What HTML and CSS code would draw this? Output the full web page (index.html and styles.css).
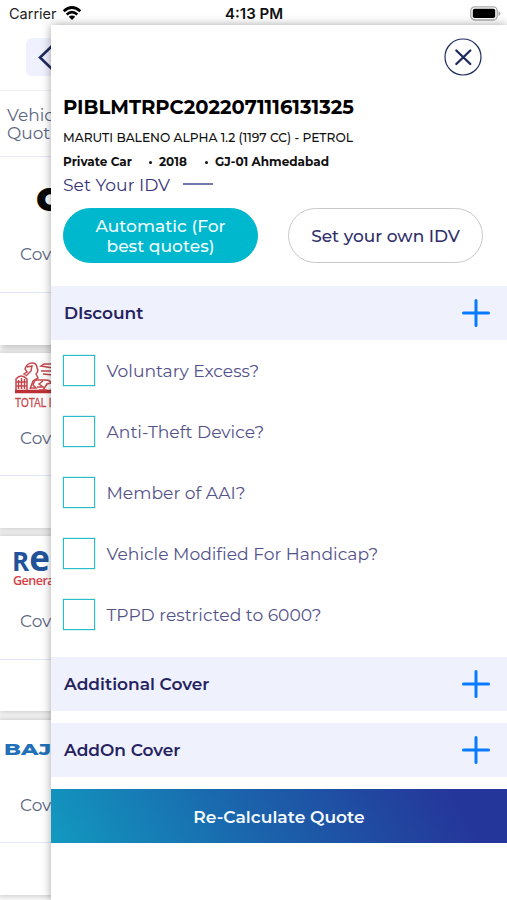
FILE: index.html
```html
<!DOCTYPE html>
<html lang="en">

<head>
    <meta charset="UTF-8" />
    <meta name="viewport" content="width=device-width, initial-scale=1.0" />
    <title>Vehicle Quotes</title>

    <link rel="stylesheet" href="styles.css">
</head>

<body>
    <!-- STATUS BAR -->
    <div class="status">
        <div class="carrier">
            <span>Carrier</span>
            <svg width="20" height="15" viewBox="0 0 20 15" fill="none" stroke="#000" stroke-width="2.7">
                <path d="M1.7 5.2 Q10 -2.2 18.3 5.2" />
                <path d="M4.7 8.5 Q10 3.7 15.3 8.5" />
                <path d="M10 14 L6.8 10.8 Q10 8 13.2 10.8 Z" fill="#000" stroke="none" />
            </svg>
        </div>
        <span class="time">4:13 PM</span>
        <svg class="battery" width="31" height="15" viewBox="0 0 31 15">
            <rect x="0.8" y="0.8" width="26.4" height="13.2" rx="4" fill="#fff" stroke="#aaa" stroke-width="1.3" />
            <rect x="2.8" y="2.8" width="22.4" height="9.2" rx="1.8" fill="#000" />
            <path d="M28.5 5 Q30.5 6 30.5 7.5 Q30.5 9 28.5 10 Z" fill="#aaa" />
        </svg>
    </div>

    <!-- QUOTES LIST -->
    <main class="quotes">
        <div class="topbar">
            <div class="back">
                <svg width="18" height="26" viewBox="0 0 18 26" fill="none" stroke="#202c60" stroke-width="2.6">
                    <path d="M15 2 L3 13.5 L15 25" />
                </svg>
            </div>
        </div>
        <div class="heading">Vehic<br>Quot</div>

        <div class="card first">
            <div class="logo digit">o</div>
            <div class="cover">Cov</div>
            <div class="foot"></div>
        </div>

        <div class="card">
            <div class="logo total">
                <svg width="48" height="33" viewBox="0 0 48 33" fill="none" stroke="#c5474b" stroke-width="1.5">
                    <path d="M0 29.5 H48" stroke="#bd3035" stroke-width="3.5" />
                    <path d="M1 28 V17 Q6 11 12 17 V28 M3.5 18 V27 M6.5 16 V27 M9.5 17 V27 M1 20 H12 M1 24 H12" />
                    <path d="M12 14 L9 12 L12 10 L10 7 Q12 1 17 1 Q22 1 22 6 Q24 9 21 12 L23 16 L18 19 L15 27 M12 5 L17 4 L16 9 L12 13" />
                    <path d="M15 26 H21 L18 23 L20 18 H30 Q36 18 38 23 L36 28 M22 25 H28 L24 22 L28 19 M28 28 L32 22 L36 21 M24 28 H32" />
                    <path d="M38 2 H29 L26 4 L38 6 M26 9 H38 M28 12 L38 13" />
                </svg>
                <span>TOTAL I</span>
            </div>
            <div class="cover">Cov</div>
            <div class="foot"></div>
        </div>

        <div class="card">
            <div class="logo reliance">
                <b><span class="cap">R</span>e</b>
                <span>Genera</span>
            </div>
            <div class="cover">Cov</div>
            <div class="foot"></div>
        </div>

        <div class="card">
            <div class="logo bajaj"><span>BAJ</span></div>
            <div class="cover">Cov</div>
            <div class="foot"></div>
        </div>
    </main>

    <!-- DRAWER -->
    <form class="drawer" action="">
        <button type="button" class="close">
            <svg width="38" height="38" viewBox="0 0 38 38" fill="none" stroke="#1d2b5e">
                <circle cx="19" cy="19" r="18" stroke-width="1.2" />
                <path d="M12.3 12.5 L26.3 26 M26.3 12.5 L12.3 26" stroke-width="2.3" stroke-linecap="round" />
            </svg>
        </button>

        <div class="info">
            <h1>PIBLMTRPC2022071116131325</h1>
            <p class="vehicle">MARUTI BALENO ALPHA 1.2 (1197 CC) - PETROL</p>
            <p class="meta"><span class="type">Private Car</span><span class="year">2018</span><span class="rto">GJ-01 Ahmedabad</span></p>
            <div class="idv"><span>Set Your IDV</span><i></i></div>
            <div class="choice">
                <button type="button" class="pill active">Automatic (For<br>best quotes)</button>
                <button type="button" class="pill">Set your own IDV</button>
            </div>
        </div>

        <div class="section">
            <span>DIscount</span>
            <svg width="28" height="28" viewBox="0 0 28 28" stroke="#087aff" stroke-width="3" stroke-linecap="round">
                <path d="M14 1.5 V26.5 M1.5 14 H26.5" />
            </svg>
        </div>

        <div class="options">
            <label><input type="checkbox"><span>Voluntary Excess?</span></label>
            <label><input type="checkbox"><span>Anti-Theft Device?</span></label>
            <label><input type="checkbox"><span>Member of AAI?</span></label>
            <label><input type="checkbox"><span>Vehicle Modified For Handicap?</span></label>
            <label><input type="checkbox"><span>TPPD restricted to 6000?</span></label>
        </div>

        <div class="section">
            <span>Additional Cover</span>
            <svg width="28" height="28" viewBox="0 0 28 28" stroke="#087aff" stroke-width="3" stroke-linecap="round">
                <path d="M14 1.5 V26.5 M1.5 14 H26.5" />
            </svg>
        </div>
        <div class="section">
            <span>AddOn Cover</span>
            <svg width="28" height="28" viewBox="0 0 28 28" stroke="#087aff" stroke-width="3" stroke-linecap="round">
                <path d="M14 1.5 V26.5 M1.5 14 H26.5" />
            </svg>
        </div>

        <button type="button" class="submit">Re-Calculate Quote</button>
    </form>
</body>

</html>
```

FILE: styles.css
```css
* {
    box-sizing: border-box;
}

body {
    margin: 0;
    width: 507px;
    height: 900px;
    overflow: hidden;
    position: relative;
    background: #fff;
    font-family: Montserrat, Inter, sans-serif;
}

h1,
p {
    margin: 0;
    white-space: nowrap;
}

button {
    font-family: inherit;
    padding: 0;
    border: 0;
    background: none;
}

svg {
    display: block;
    flex: none;
}

/* status bar */
.status {
    height: 25px;
    padding: 2px 5px 0 9px;
    display: grid;
    grid-template-columns: 1fr auto 1fr;
    align-items: center;
    font-family: Inter, sans-serif;
    font-size: 14.5px;
    line-height: 22px;
    color: #222;
}

.carrier {
    display: flex;
    align-items: center;
    gap: 5px;
}

.time {
    padding-right: 3px;
    font-size: 15px;
    font-weight: 600;
    color: #111;
}

.battery {
    justify-self: end;
    margin-right: 1px;
}

/* quotes list */
.quotes {
    width: 507px;
    color: #5b6582;
}

.topbar {
    height: 66px;
    padding: 13px 0 0 26px;
    border-bottom: 1px solid #efeff6;
}

.back {
    width: 38px;
    height: 38px;
    padding: 6px 0 0 11px;
    border-radius: 6px;
    background: #f0f1fe;
}

.heading {
    height: 66px;
    padding: 15px 0 0 7px;
    font-size: 17px;
    line-height: 18px;
    border-bottom: 1px solid #e6e8fa;
}

.card {
    height: 175px;
    margin-bottom: 8.4px;
    display: flex;
    flex-direction: column;
    background: #fff;
    box-shadow: 0 0 6px 2px #ccc;
}

.card.first {
    height: 187.5px;
    box-shadow: 0 5px 5px -1px #ccc;
}

.logo {
    height: 65px;
    white-space: nowrap;
}

.first .logo {
    height: 77px;
}

.cover {
    height: 58.5px;
    padding: 9px 0 0 20px;
    font-size: 17px;
    line-height: 22px;
    border-bottom: 1px solid #e3e5fa;
}

.digit {
    padding: 14px 0 0 36px;
    font-size: 42px;
    line-height: 50px;
    font-weight: 800;
    color: #080808;
}

.total {
    padding: 9px 0 0 15px;
    color: #c8484c;
    font-family: "Liberation Sans Narrow", "Liberation Sans", sans-serif;
    font-size: 12.5px;
    line-height: 16px;
}

.total span {
    display: block;
    width: max-content;
    transform: scaleX(0.8);
    transform-origin: left;
    -webkit-text-stroke: 0.3px #c8484c;
}

.reliance {
    padding: 1px 0 0 12px;
    font-family: "Open Sans", sans-serif;
    color: #d93c43;
    font-size: 12.5px;
    line-height: 16px;
    display: flex;
    flex-direction: column;
}

.reliance b {
    height: 36px;
    font-size: 35px;
    line-height: 42px;
    color: #22539a;
}

.reliance .cap {
    font-size: 26px;
}

.reliance > span {
    padding-left: 1px;
    font-weight: 600;
    letter-spacing: -0.5px;
}

.bajaj {
    padding: 19px 0 0 4px;
    font-size: 16px;
    line-height: 22px;
    font-weight: 800;
    color: #2271b8;
}

.bajaj span {
    display: block;
    width: max-content;
    transform: scaleX(1.38);
    transform-origin: left;
}

/* drawer */
.drawer {
    position: absolute;
    top: 25px;
    left: 51px;
    width: 456px;
    height: 875px;
    display: flex;
    flex-direction: column;
    background: #fff;
    box-shadow: 0 0 9px rgba(0, 0, 0, 0.35);
    color: #25235f;
}

.close {
    width: 38px;
    height: 38px;
    margin: 13px 25px 0 auto;
}

.info {
    height: 210px;
    flex: none;
    padding: 18px 24px 0 12px;
}

h1 {
    font-size: 19.55px;
    line-height: 26px;
    font-weight: 700;
    color: #000;
}

.vehicle {
    margin-top: 7px;
    font-size: 12.25px;
    line-height: 22px;
    color: #111;
    font-weight: 500;
}

.meta {
    display: flex;
    margin-top: 3px;
    font-size: 12px;
    line-height: 20px;
    color: #111;
    font-weight: 700;
}

.type {
    width: 84.5px;
}

.year {
    width: 56px;
}

.year::before,
.rto::before {
    content: "";
    display: inline-block;
    width: 3px;
    height: 3px;
    margin: 0 7.5px 2px 1px;
    border-radius: 50%;
    background: #111;
}

.idv {
    display: flex;
    align-items: center;
    gap: 13px;
    margin-top: 1px;
    height: 22px;
    font-size: 17.2px;
    color: #37347a;
}

.idv i {
    width: 30px;
    height: 2px;
    background: #7476b0;
}

.choice {
    display: flex;
    justify-content: space-between;
    margin-top: 13px;
}

.pill {
    width: 195px;
    height: 55px;
    border: 1.5px solid #c9c9c9;
    border-radius: 28px;
    font-size: 17px;
    line-height: 20px;
    font-weight: 500;
    color: #302d6b;
}

.active {
    border-color: #00b8ce;
    background: #00b8ce;
    color: #eefcff;
    font-size: 17.1px;
}

.section {
    flex: none;
    height: 54px;
    margin-bottom: 12px;
    padding: 0 17px 0 13px;
    display: flex;
    align-items: center;
    justify-content: space-between;
    background: #eff1fd;
    font-size: 17px;
    font-weight: 600;
}

.options {
    flex: none;
    height: 305px;
    padding: 3px 0 0 12px;
    display: flex;
    flex-direction: column;
    gap: 30px;
}

.options label {
    display: flex;
    align-items: center;
    gap: 12px;
    height: 31px;
    font-size: 17.15px;
    color: #54528a;
}

.options input {
    appearance: none;
    width: 31.5px;
    height: 31px;
    margin: 0;
    border: 1.5px solid #28bdca;
    box-shadow: 0 0 1px #28bdca;
}

.submit {
    flex: none;
    height: 54px;
    background: linear-gradient(60deg, #1299c0, #1b62ab 45%, #25369a 88%);
    color: #f4faff;
    font-size: 17.1px;
    font-weight: 600;
}
```
